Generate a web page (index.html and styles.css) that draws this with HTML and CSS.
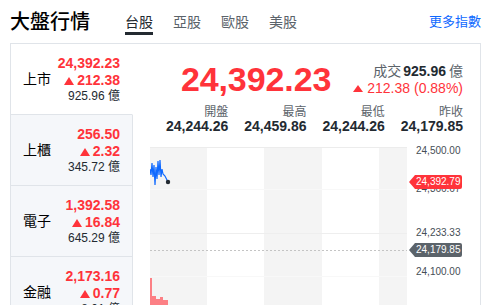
FILE: index.html
```html
<!DOCTYPE html>
<html lang="zh-Hant">
<head>
<meta charset="utf-8">
<title>大盤行情</title>
<link rel="stylesheet" href="styles.css">
</head>
<body>
<header class="header">
  <h1 class="title">大盤行情</h1>
  <nav class="tabs">
    <a class="tab active">台股</a>
    <a class="tab">亞股</a>
    <a class="tab">歐股</a>
    <a class="tab">美股</a>
  </nav>
  <a class="more">更多指數</a>
</header>
<section class="box">
  <aside class="list">
    <div class="item active">
      <span class="name">上市</span>
      <div class="vals">
        <div class="price">24,392.23</div>
        <div class="chg"><i class="tri"></i>212.38</div>
        <div class="vol">925.96 億</div>
      </div>
    </div>
    <div class="item">
      <span class="name">上櫃</span>
      <div class="vals">
        <div class="price">256.50</div>
        <div class="chg"><i class="tri"></i>2.32</div>
        <div class="vol">345.72 億</div>
      </div>
    </div>
    <div class="item">
      <span class="name">電子</span>
      <div class="vals">
        <div class="price">1,392.58</div>
        <div class="chg"><i class="tri"></i>16.84</div>
        <div class="vol">645.29 億</div>
      </div>
    </div>
    <div class="item">
      <span class="name">金融</span>
      <div class="vals">
        <div class="price">2,173.16</div>
        <div class="chg"><i class="tri"></i>0.77</div>
        <div class="vol">8.01 億</div>
      </div>
    </div>
  </aside>
  <main class="main">
    <div class="quote">
      <div class="big">24,392.23</div>
      <div class="side">
        <div class="turn"><span class="lbl">成交</span><b>925.96</b><span class="lbl">億</span></div>
        <div class="diff"><i class="tri small"></i>212.38 (0.88%)</div>
      </div>
    </div>
    <div class="stats">
      <div class="stat"><div class="slbl">開盤</div><div class="sval">24,244.26</div></div>
      <div class="stat"><div class="slbl">最高</div><div class="sval">24,459.86</div></div>
      <div class="stat"><div class="slbl">最低</div><div class="sval">24,244.26</div></div>
      <div class="stat"><div class="slbl">昨收</div><div class="sval">24,179.85</div></div>
    </div>
    <div class="chart">
      <svg class="plot" width="257" height="160" viewBox="0 0 257 160">
        <rect x="0" y="0" width="57" height="160" fill="#f4f4f4"/>
        <rect x="114" y="0" width="58" height="160" fill="#f4f4f4"/>
        <rect x="229" y="0" width="28" height="160" fill="#f4f4f4"/>
        <line x1="0" y1="0.5" x2="257" y2="0.5" stroke="#ececec"/>
        <line x1="0" y1="42.5" x2="257" y2="42.5" stroke="#f8f8f8"/>
        <line x1="0" y1="86.5" x2="257" y2="86.5" stroke="#eeeeee"/>
        <line x1="0" y1="129.5" x2="257" y2="129.5" stroke="#f8f8f8"/>
        <line x1="0" y1="103.5" x2="257" y2="103.5" stroke="#c4c4c4" stroke-dasharray="2 2"/>
        <polyline fill="none" stroke="#0f69ff" stroke-width="1.2" points="0,22 1,28 2,16 3,30 4,18 5,38 6,20 7,32 8,14 9,28 10,13 11,30 12,22 13,27 15,29 18,35"/>
        <circle cx="18" cy="35" r="2.2" fill="#232a31"/>
        <g fill="#ff5a60" opacity="0.75">
          <rect x="0" y="131" width="2" height="29"/>
          <rect x="2" y="149" width="4" height="11"/>
          <rect x="6" y="152" width="4" height="8"/>
          <rect x="10" y="150" width="3" height="10"/>
          <rect x="13" y="153" width="5" height="7"/>
        </g>
      </svg>
      <div class="axis">
        <span class="tick t1">24,500.00</span>
        <span class="tick t2">24,366.67</span>
        <span class="tick t3">24,233.33</span>
        <span class="tick t4">24,100.00</span>
        <span class="tag up">24,392.79</span>
        <span class="tag prev">24,179.85</span>
      </div>
    </div>
  </main>
</section>
</body>
</html>
```
FILE: styles.css
```css
* { box-sizing: border-box; margin: 0; padding: 0; }
html, body { width: 490px; height: 305px; overflow: hidden; background: #fff; }
body {
  font-family: "Liberation Sans", "Noto Sans CJK TC", sans-serif;
  color: #232a31;
}
.header {
  height: 43px;
  display: flex;
  align-items: flex-start;
  padding: 11px 9px 0 10px;
}
.title {
  font-family: "Noto Sans CJK TC", sans-serif;
  font-size: 20px;
  line-height: 20px;
  font-weight: 500;
  color: #000;
  width: 115px;
}
.tabs { display: flex; gap: 20px; }
.tab {
  font-family: "Noto Sans CJK TC", sans-serif;
  font-size: 14px;
  line-height: 20px;
  color: #5b636a;
  padding-bottom: 1px;
  border-bottom: 3px solid transparent;
}
.tab.active { color: #232a31; border-bottom-color: #232a31; }
.more {
  margin-left: auto;
  font-family: "Noto Sans CJK TC", sans-serif;
  font-size: 13px;
  line-height: 20px;
  color: #0f69ff;
}
.box {
  margin-left: 10px;
  width: 471px;
  height: 262px;
  border: 1px solid #e0e4e9;
  border-bottom: none;
  display: flex;
  overflow: hidden;
}
.list { width: 122px; flex: none; }
.item {
  height: 71px;
  display: flex;
  align-items: center;
  justify-content: space-between;
  padding: 0 12px 0 12px;
  background: #f5f7fa;
  border-bottom: 1px solid #e0e4e9;
  border-right: 1px solid #e0e4e9;
}
.item.active { background: #fff; border-right-color: transparent; }
.name {
  font-family: "Noto Sans CJK TC", sans-serif;
  font-size: 14px;
  color: #000;
  margin-bottom: 2px;
}
.vals { text-align: right; }
.price, .chg { font-size: 14px; line-height: 17px; font-weight: 700; color: #ff333a; }
.tri {
  display: inline-block;
  width: 0;
  height: 0;
  border-left: 5.5px solid transparent;
  border-right: 5.5px solid transparent;
  border-bottom: 8px solid #ff333a;
  margin-right: 3px;
  vertical-align: 0;
}
.tri.small {
  border-left-width: 5px;
  border-right-width: 5px;
  border-bottom-width: 7px;
  margin-right: 4px;
  vertical-align: 1px;
}
.vol { font-size: 12px; line-height: 15px; color: #232a31; }
.main { flex: 1; padding: 15px 17px 0 17px; }
.quote { display: flex; justify-content: flex-end; align-items: center; gap: 22px; height: 40px; }
.big { font-size: 34px; line-height: 40px; font-weight: 700; color: #ff333a; letter-spacing: -0.1px; }
.side { text-align: right; font-size: 14px; line-height: 17px; }
.turn .lbl { font-family: "Noto Sans CJK TC", sans-serif; color: #5b636a; }
.turn b { font-weight: 700; margin: 0 3px 0 2px; }
.diff { color: #ff333a; }
.stats {
  display: grid;
  grid-template-columns: repeat(4, 1fr);
  margin-top: 4px;
  text-align: right;
}
.slbl { font-family: "Noto Sans CJK TC", sans-serif; font-size: 12px; line-height: 16px; color: #5b636a; }
.sval { font-size: 14px; line-height: 14px; font-weight: 700; }
.chart { display: flex; margin: 14px -17px 0 0; }
.plot { display: block; flex: none; }
.axis { position: relative; flex: 1; height: 160px; }
.tick {
  position: absolute;
  left: 9px;
  font-size: 10px;
  line-height: 12px;
  color: #464e56;
}
.t1 { top: -2px; }
.t2 { top: 36px; }
.t3 { top: 80px; }
.t4 { top: 119px; }
.tag {
  position: absolute;
  left: 8px;
  width: 47px;
  height: 14px;
  padding-left: 1px;
  font-size: 10px;
  line-height: 14px;
  color: #fff;
  border-radius: 0 2px 2px 0;
}
.tag::before {
  content: "";
  position: absolute;
  left: -6px;
  top: 0;
  border-top: 7px solid transparent;
  border-bottom: 7px solid transparent;
  border-right: 6px solid;
}
.tag.up { top: 28px; background: #ff333a; }
.tag.up::before { border-right-color: #ff333a; }
.tag.prev { top: 96px; background: #5b636a; }
.tag.prev::before { border-right-color: #5b636a; }
```
